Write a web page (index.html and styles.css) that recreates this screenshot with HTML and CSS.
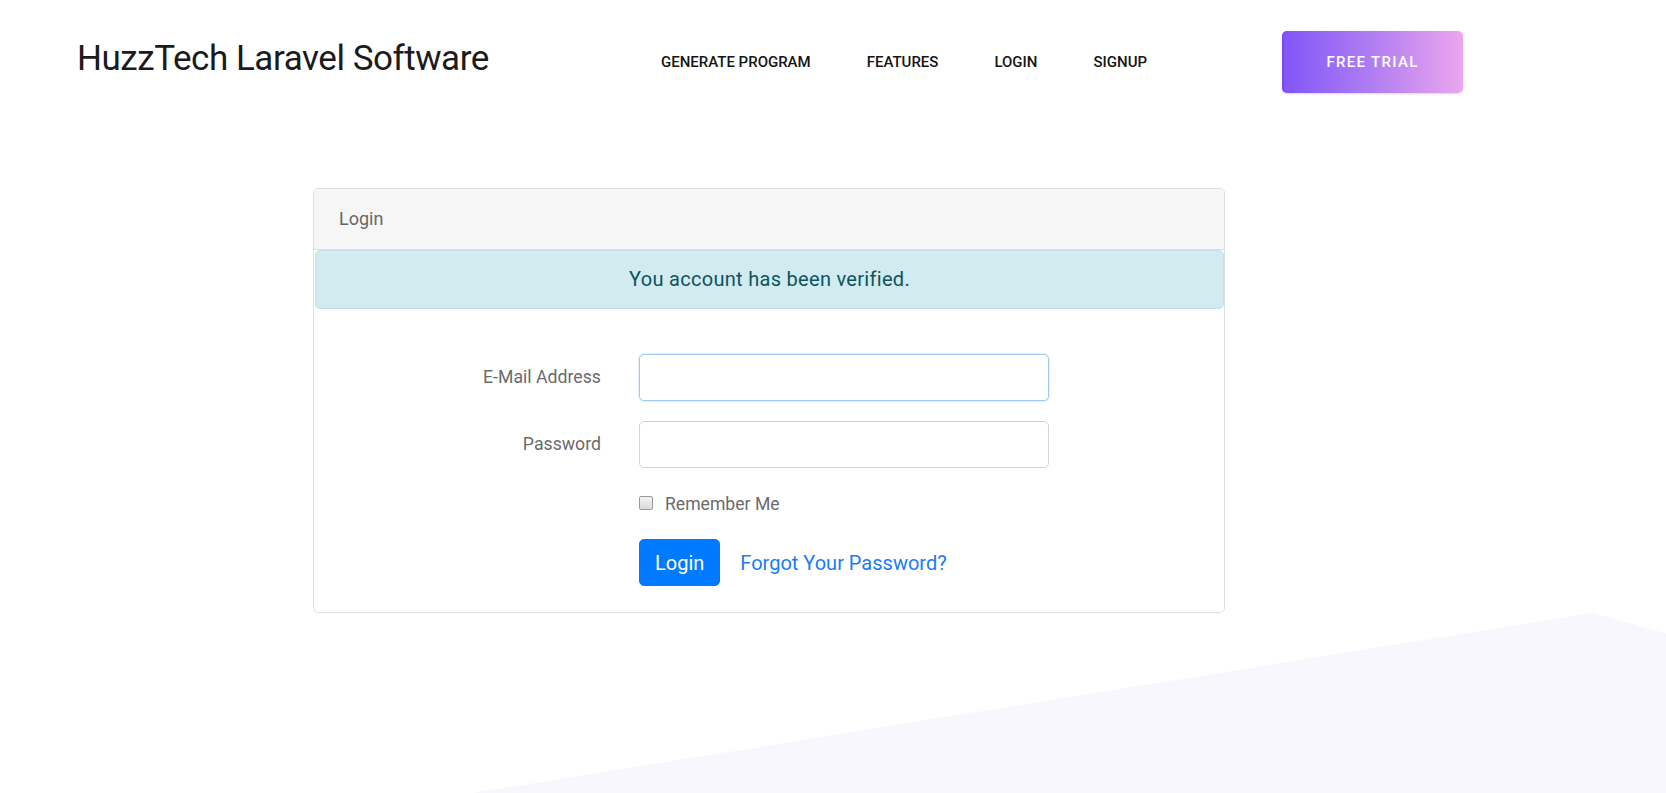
FILE: index.html
```html
<!DOCTYPE html>
<html lang="en">
<head>
<meta charset="utf-8">
<title>HuzzTech Laravel Software - Login</title>
<link rel="stylesheet" href="styles.css">
</head>
<body>
<div class="bg-shape"></div>
<header class="topbar">
  <a class="brand" href="#">HuzzTech Laravel Software</a>
  <nav class="nav">
    <a href="#" class="nav-link">Generate Program</a>
    <a href="#" class="nav-link">Features</a>
    <a href="#" class="nav-link">Login</a>
    <a href="#" class="nav-link">Signup</a>
  </nav>
  <a href="#" class="trial-btn">Free Trial</a>
</header>

<main class="main">
  <section class="card">
    <div class="card-header">Login</div>
    <div class="alert">You account has been verified.</div>
    <div class="card-body">
      <form class="login-form">
        <label class="form-label" for="email">E-Mail Address</label>
        <input class="form-control focused" id="email" type="email">
        <label class="form-label" for="password">Password</label>
        <input class="form-control" id="password" type="password">
        <div class="spacer"></div>
        <label class="form-check"><span class="checkbox"></span><span>Remember Me</span></label>
        <div class="spacer"></div>
        <div class="actions">
          <button type="button" class="btn-primary">Login</button>
          <a href="#" class="btn-link">Forgot Your Password?</a>
        </div>
      </form>
    </div>
  </section>
</main>
</body>
</html>
```

FILE: styles.css
```css
html, body {
  margin: 0;
  padding: 0;
}
body {
  width: 1666px;
  height: 793px;
  overflow: hidden;
  position: relative;
  background: #ffffff;
  font-family: Roboto, "Liberation Sans", sans-serif;
  color: #212529;
}
a { text-decoration: none; }

.bg-shape {
  position: absolute;
  left: 0;
  top: 0;
  width: 1666px;
  height: 793px;
  background: #f9f7fe;
  clip-path: polygon(473px 793px, 1592px 613px, 1666px 633px, 1666px 793px);
  z-index: 0;
}

.topbar {
  position: relative;
  z-index: 1;
  display: flex;
  align-items: center;
  height: 62px;
  padding: 31px 0 0 77px;
}
.brand {
  width: 584px;
  font-family: Roboto, sans-serif;
  font-weight: 400;
  font-size: 35px;
  letter-spacing: -0.45px;
  color: #1b1b1b;
  line-height: 1;
  margin-top: -7px;
}
.nav {
  display: flex;
  gap: 56px;
}
.nav-link {
  font-family: Roboto, sans-serif;
  font-weight: 500;
  font-size: 15px;
  text-transform: uppercase;
  color: #151515;
}
.trial-btn {
  margin-left: 135px;
  width: 181px;
  height: 62px;
  box-sizing: border-box;
  display: flex;
  align-items: center;
  justify-content: center;
  border-radius: 5px;
  background: linear-gradient(90deg, #8155f8 0%, #b07ef2 50%, #eca6ee 100%);
  box-shadow: inset 2px 0 0 rgba(100, 60, 230, 0.35), 0 1px 2px rgba(120, 80, 220, 0.25);
  color: #ffffff;
  font-family: Roboto, sans-serif;
  font-weight: 500;
  font-size: 15px;
  letter-spacing: 1.3px;
  text-transform: uppercase;
}

.main {
  position: relative;
  z-index: 1;
  padding: 95px 0 0 313px;
}
.card {
  width: 912px;
  box-sizing: border-box;
  border: 1px solid #dfdfdf;
  border-radius: 5px;
  background: #ffffff;
}
.card-header {
  background: #f6f6f6;
  border-bottom: 1px solid #dcdcdc;
  border-radius: 4px 4px 0 0;
  padding: 15px 25px;
  line-height: 30px;
  font-family: Roboto, sans-serif;
  font-size: 18px;
  color: #676767;
}
.alert {
  margin: 0 0 20px 1px;
  padding: 14px 20px;
  line-height: 29px;
  background: #d1ebf0;
  border: 1px solid #bfe3ea;
  border-radius: 5px;
  text-align: center;
  font-family: Roboto, sans-serif;
  font-size: 20px;
  letter-spacing: 0.3px;
  color: #0c5460;
}
.card-body {
  padding: 25px 25px 26px;
}
.login-form {
  display: grid;
  grid-template-columns: 262px 410px;
  column-gap: 38px;
  row-gap: 20px;
  align-items: start;
}
.form-label {
  text-align: right;
  font-size: 17.7px;
  line-height: 30px;
  padding-top: 8px;
  color: #6b6b6b;
}
.form-control {
  height: 47px;
  box-sizing: border-box;
  border: 1px solid #ced4da;
  border-radius: 5px;
  background: #ffffff;
  margin: 0;
}
.form-control.focused {
  border-color: #9fc8f3;
  box-shadow: 0 0 0 1px rgba(160, 200, 245, 0.25);
}
.form-check {
  display: flex;
  align-items: center;
  gap: 12px;
  font-size: 17.6px;
  line-height: 30px;
  padding-top: 1px;
  color: #6b6b6b;
}
.checkbox {
  width: 12px;
  height: 12px;
  border: 1px solid #9a9a9a;
  border-radius: 2px;
  background: linear-gradient(#f2f2f2, #dcdcdc);
  margin-top: -2px;
}
.actions {
  display: flex;
  align-items: center;
  gap: 20px;
}
.btn-primary {
  height: 47px;
  padding: 0 15px;
  border: 1px solid #007bff;
  border-radius: 5px;
  background: #007bff;
  color: #ffffff;
  font-family: Roboto, sans-serif;
  font-size: 20px;
}
.btn-link {
  color: #1a7cf5;
  font-size: 20px;
  line-height: 30px;
}
```
